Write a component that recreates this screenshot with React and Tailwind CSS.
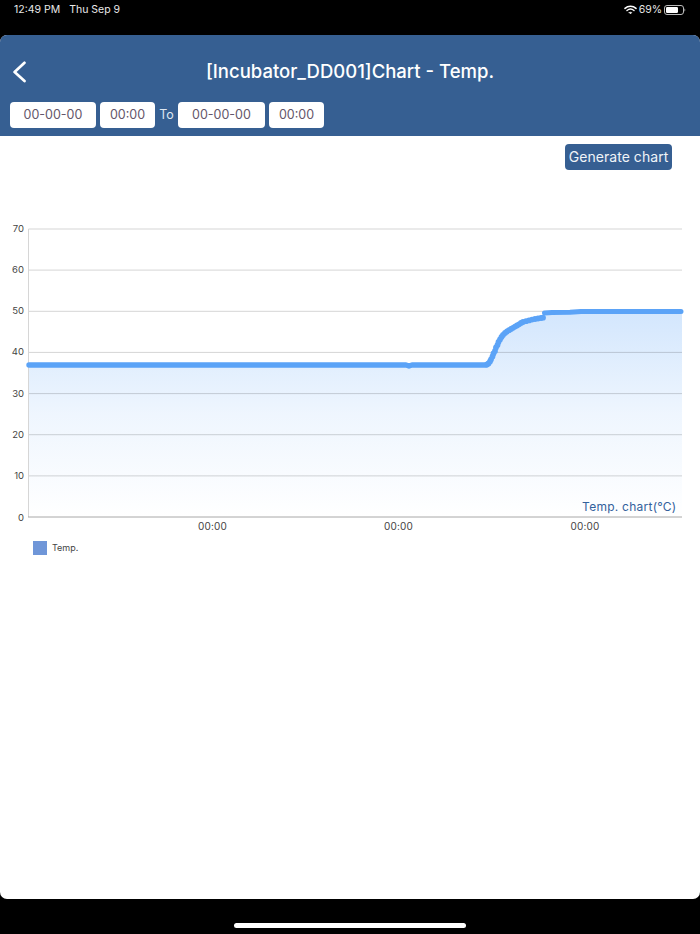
import React from "react";

const FONT = { fontFamily: "Inter, 'Liberation Sans', sans-serif" };
const gridYs = [229, 270.1, 311.3, 352.4, 393.6, 434.7, 475.9];
const yLabels = ["70", "60", "50", "40", "30", "20", "10", "0"];
const linePath = "M29 365 L406 365 L409 366 L412 365 L486 365";
const linePath2 = "M544.5 313 L552 312.5 L570 312.2 L581 311.4 L681 311.4";
const dots = [
  [487, 364.5], [488.5, 363.5], [490, 361.5], [491, 359.5], [492.5, 356.5], [493.5, 353.5], [495, 351],
  [496, 347.5], [497.5, 345], [498.5, 342], [500, 339.5], [501.5, 337], [503, 335], [505, 333], [507, 331.5],
  [509, 330.2], [511, 329], [513, 327.8], [515, 326.6], [517, 325.5], [519, 324.3], [521, 323], [523, 322],
  [526, 321.2], [529, 320.4], [532, 319.6], [535, 319], [538, 318.5], [541, 318], [543, 317.7],
];
const areaPath =
  "M28.5 365 L486 365 L491 360 L495 350 L500 339 L507 331 L517 325 L530 320 L543 317.5 L544 313 L570 312.2 L581 311.4 L682 311.4 L682 517 L28.5 517 Z";

function Field({ w, children }) {
  return (
    <div className={`${w} h-[26px] pt-[1px] rounded-[4px] bg-white flex items-center justify-center text-[12.5px] text-[#64566a]`}>
      {children}
    </div>
  );
}

function StatusBar() {
  return (
    <div className="h-[35px] shrink-0 bg-black flex items-start justify-between pl-[14px] pr-[14px] pt-[3px] text-[10.5px] leading-[13px] text-[#e8e8e8]">
      <div className="flex gap-[9px]">
        <span>12:49 PM</span>
        <span>Thu Sep 9</span>
      </div>
      <div className="flex items-center gap-[2px]">
        <svg width="13" height="10" viewBox="0 0 13 10" fill="none" stroke="#fff" strokeLinecap="round">
          <path d="M1 3.4 C4 .6 9 .6 12 3.4" strokeWidth="1.5" />
          <path d="M3 5.5 C5 3.9 8 3.9 10 5.5" strokeWidth="1.5" />
          <path d="M5.2 7.6 L6.5 8.9 L7.8 7.6 C7 7 6 7 5.2 7.6 Z" fill="#fff" strokeWidth=".6" />
        </svg>
        <span>69%</span>
        <svg width="22" height="10" viewBox="0 0 22 10">
          <rect x=".5" y=".5" width="19" height="9" rx="2.5" fill="none" stroke="#bbb" strokeWidth="1" />
          <rect x="2" y="2" width="12" height="6" rx="1.2" fill="#fff" />
          <path d="M20.5 3.4 C21.5 3.8 21.5 6.2 20.5 6.6 Z" fill="#bbb" />
        </svg>
      </div>
    </div>
  );
}

function Chart() {
  return (
    <svg viewBox="0 200 700 340" className="block w-[700px] h-[340px] mt-[30px]">
      <defs>
        <linearGradient id="area" x1="0" y1="311" x2="0" y2="517" gradientUnits="userSpaceOnUse">
          <stop offset="0" stopColor="#5ba3f7" stopOpacity="0.27" />
          <stop offset="0.5" stopColor="#5ba3f7" stopOpacity="0.1" />
          <stop offset="1" stopColor="#5ba3f7" stopOpacity="0" />
        </linearGradient>
      </defs>
      <path d={areaPath} fill="url(#area)" />
      {gridYs.map((y) => (
        <line key={y} x1="28.5" x2="682" y1={y} y2={y} stroke="#000" strokeOpacity="0.17" strokeWidth="1" />
      ))}
      <line x1="28.5" x2="28.5" y1="229" y2="517" stroke="#d6d6d6" strokeWidth="1" />
      <line x1="28" x2="682" y1="517" y2="517" stroke="#a8a8a8" strokeWidth="1" />
      <path d={linePath} fill="none" stroke="#5ba3f7" strokeWidth="5.4" strokeLinecap="round" strokeLinejoin="round" />
      <path d={linePath2} fill="none" stroke="#5ba3f7" strokeWidth="5" strokeLinecap="round" strokeLinejoin="round" />
      {dots.map(([x, y]) => (
        <circle key={x} cx={x} cy={y} r="2.9" fill="#5ba3f7" />
      ))}
      {yLabels.map((t, i) => (
        <text key={t} x="24" y={[228, 269, 310, 351, 393, 434, 475, 517][i] + 3.5} textAnchor="end" fontSize="9.5" fill="#444">
          {t}
        </text>
      ))}
      {[212.5, 398.5, 585].map((x) => (
        <text key={x} x={x} y="530" textAnchor="middle" fontSize="10" letterSpacing="0.2" fill="#444">
          00:00
        </text>
      ))}
      <text x="676.5" y="511" textAnchor="end" fontSize="12" letterSpacing="0.25" fill="#33619c">
        Temp. chart(°C)
      </text>
    </svg>
  );
}

export default function App() {
  return (
    <div style={FONT} className="w-[700px] h-[934px] bg-black flex flex-col overflow-hidden">
      <StatusBar />
      <div className="flex-1 bg-white rounded-[7px] overflow-hidden flex flex-col">
        <div className="h-[101px] shrink-0 bg-[#365f92] flex flex-col">
          <div className="h-[67px] pt-[7px] flex items-center">
            <div className="w-[60px] pl-[12px]">
              <svg width="15" height="22" viewBox="0 0 15 22" fill="none" stroke="#fff" strokeWidth="2.7" strokeLinecap="round" strokeLinejoin="round" className="block">
                <path d="M12.5 1.8 L2.6 11 L12.5 20" />
              </svg>
            </div>
            <div className="flex-1 text-center text-white text-[18.5px] font-medium">[Incubator_DD001]Chart - Temp.</div>
            <div className="w-[60px]" />
          </div>
          <div className="flex items-center pl-[10px]">
            <Field w="w-[86px]">00-00-00</Field>
            <div className="w-[4px]" />
            <Field w="w-[55px]">00:00</Field>
            <span className="w-[23px] pt-[1px] text-center text-[12.5px] text-[#dfe7f1]">To</span>
            <Field w="w-[87px]">00-00-00</Field>
            <div className="w-[4px]" />
            <Field w="w-[55px]">00:00</Field>
          </div>
        </div>
        <div className="flex-1 flex flex-col">
          <div className="flex justify-end pt-[8px] pr-[28px]">
            <button className="w-[107px] h-[26px] pb-[2px] rounded-[4px] bg-[#365f92] text-[#f0f4f8] text-[14px] tracking-[0.05px] flex items-center justify-center">
              Generate chart
            </button>
          </div>
          <Chart />
          <div className="flex items-center pl-[33px] mt-[1px] text-[9px] text-[#444]">
            <span className="w-[14px] h-[14px] bg-[#6f96d8] mr-[5px]" />
            <span>Temp.</span>
          </div>
        </div>
      </div>
      <div className="h-[35px] shrink-0 flex justify-center pt-[24px]">
        <div className="w-[232px] h-[5px] rounded-full bg-white" />
      </div>
    </div>
  );
}
